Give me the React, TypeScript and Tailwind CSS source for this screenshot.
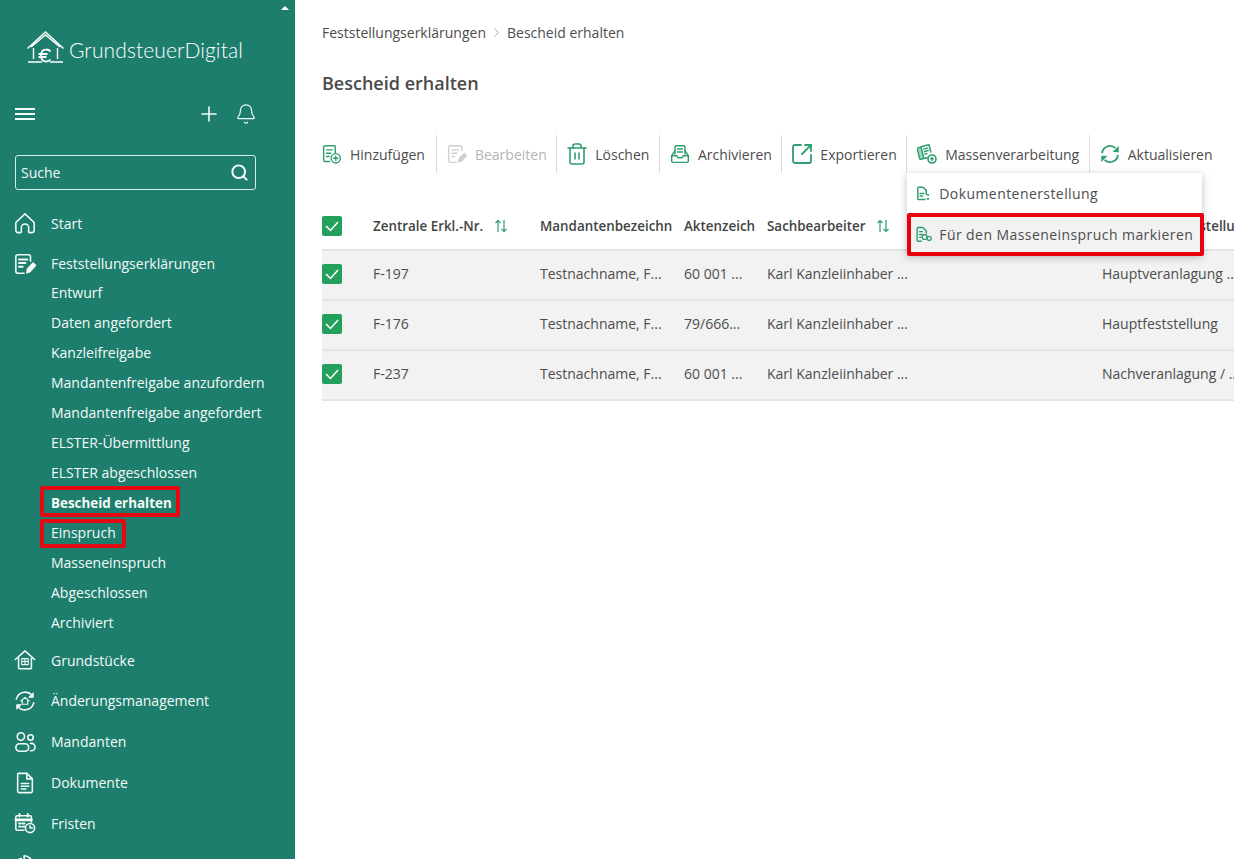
import { ReactNode } from 'react';
import { Bell, ChevronRight, Plus, Search, SquareArrowOutUpRight, Trash2 } from 'lucide-react';

const FONT = "font-['Open_Sans','Noto_Sans',sans-serif]";

type IconProps = { className?: string };

function Svg({ className, children }: IconProps & { children: ReactNode }) {
  return (
    <svg viewBox="0 0 24 24" fill="none" stroke="currentColor" strokeWidth={1.7} strokeLinecap="round" strokeLinejoin="round" className={className}>
      {children}
    </svg>
  );
}

const HomeIcon = ({ className }: IconProps) => (
  <Svg className={className}>
    <path d="M2 11.500 12 2l10 9.500V20a2.500 2.500 0 0 1-2.500 2.500H17a1 1 0 0 1-1-1V17a4 4 0 0 0-8 0v4.500a1 1 0 0 1-1 1H4.500A2.500 2.500 0 0 1 2 20z" />
  </Svg>
);

const FormIcon = ({ className }: IconProps) => (
  <Svg className={className}>
    <path d="M18 9V4a2 2 0 0 0-2-2H4a2 2 0 0 0-2 2v16a2 2 0 0 0 2 2h7" />
    <path d="M5.500 7h9M5.500 11h7M5.500 15h4" strokeWidth={2.200} />
    <path d="M14 21.500l.8-4 6-6.500 2.700 2.600-6 6.500z" fill="currentColor" />
  </Svg>
);

const HouseGridIcon = ({ className }: IconProps) => (
  <Svg className={className}>
    <path d="M1.500 11.500 12 2l10.500 9.500M5 10v10.500a1 1 0 0 0 1 1h12a1 1 0 0 0 1-1V10" />
    <path d="M8.500 10.500h7v6.500h-7zM12 10.500V17M8.500 13.700h7" strokeWidth={1.200} />
  </Svg>
);

const ChangeIcon = ({ className }: IconProps) => (
  <Svg className={className}>
    <path d="M2.500 10a10 10 0 0 1 17-4.500M21.500 14a10 10 0 0 1-17 4.500" />
    <path d="M21 3.500V8h-4.500zM3 20.500V16h4.500z" fill="currentColor" strokeWidth={1} />
    <path d="M7.500 12 12 8l4.500 4M9 11v4.500h6V11" strokeWidth={1.200} />
  </Svg>
);

const PeopleIcon = ({ className }: IconProps) => (
  <Svg className={className}>
    <circle cx="7.500" cy="6" r="4" />
    <circle cx="18" cy="7" r="3" />
    <rect x="2" y="14" width="14" height="8" rx="4" />
    <path d="M18 13.500h1a3.500 3.500 0 0 1 0 8h-1" />
  </Svg>
);

const DocIcon = ({ className }: IconProps) => (
  <Svg className={className}>
    <path d="M5 1.500h9l6 6V21a1.500 1.500 0 0 1-1.500 1.500h-13A1.500 1.500 0 0 1 4 21V2.500a1 1 0 0 1 1-1z" />
    <path d="M14 1.500V7.500h6M8 12.500h8M8 15.500h8M8 18.500h5" />
  </Svg>
);

const CalendarIcon = ({ className }: IconProps) => (
  <Svg className={className}>
    <path d="M11 20H3.500A1.500 1.500 0 0 1 2 18.500v-13A1.500 1.500 0 0 1 3.500 4h14A1.500 1.500 0 0 1 19 5.500V11" />
    <path d="M2 8.500h17" strokeWidth={3} />
    <path d="M6 2v3M15 2v3M5.500 12.500h2M9.500 12.500h2M5.500 16h2M9.500 16h2" strokeWidth={2} />
    <circle cx="17.500" cy="17.500" r="5" />
    <path d="M17.500 15v2.500h2.500" />
  </Svg>
);

const ReportIcon = ({ className }: IconProps) => (
  <Svg className={className}>
    <path d="M11 3v9h9a9 9 0 0 0-9-9zM8 6a9 9 0 1 0 10 10" />
  </Svg>
);

const AddDocIcon = ({ className }: IconProps) => (
  <Svg className={className}>
    <path d="M9 21H3.500A1.500 1.500 0 0 1 2 19.500v-16A1.500 1.500 0 0 1 3.500 2h11A1.500 1.500 0 0 1 16 3.500V11" />
    <path d="M5.500 7h7M5.500 11h5M5.500 15h3" />
    <circle cx="16.500" cy="17" r="5.500" />
    <path d="M16.500 14.500v5M14 17h5" />
  </Svg>
);

const EditDocIcon = ({ className }: IconProps) => (
  <Svg className={className}>
    <path d="M18 8V4a2 2 0 0 0-2-2H4a2 2 0 0 0-2 2v16a2 2 0 0 0 2 2h7" />
    <path d="M6 7h8M6 11h6M6 15h3" />
    <path d="M14 21.500l.8-4 6-6 2.700 2.600-6 6z" fill="currentColor" />
  </Svg>
);

const ArchiveIcon = ({ className }: IconProps) => (
  <Svg className={className}>
    <path d="M6 12V3.500A1.500 1.500 0 0 1 7.500 2h9A1.500 1.500 0 0 1 18 3.500V12" />
    <path d="M9 6h6M9 9.500h6" />
    <path d="M2 14l4-6M22 14l-4-6" />
    <path d="M2 14h6l1.500 2.500h5L16 14h6v6.500a1.500 1.500 0 0 1-1.500 1.500h-17A1.500 1.500 0 0 1 2 20.500z" />
  </Svg>
);

const BulkIcon = ({ className }: IconProps) => (
  <Svg className={className}>
    <g transform="rotate(-14 9 10)">
      <rect x="1.500" y="3" width="5" height="14" rx="1" fill="currentColor" fillOpacity={0.45} />
      <path d="M6.500 2.500h10v9M6.500 17h4" />
      <path d="M9 6h5M9 9h5M9 12h2.500" />
    </g>
    <circle cx="18" cy="18" r="4.800" fill="#fff" strokeWidth={2} />
    <path d="M18 20.500v-4M16.400 18l1.600-1.800 1.600 1.800" strokeWidth={1.400} />
  </Svg>
);

const SyncIcon = ({ className }: IconProps) => (
  <svg viewBox="0 0 24 24" fill="none" stroke="currentColor" strokeWidth={2.200} className={className}>
    <path d="M2.500 11A9.500 9.500 0 0 1 18.500 5" />
    <path d="M22.500 2.500v7.500l-7.500-.5z" fill="currentColor" stroke="none" />
    <path d="M21.500 13A9.500 9.500 0 0 1 5.500 19" />
    <path d="M1.500 21.500V14l7.500.5z" fill="currentColor" stroke="none" />
  </svg>
);

const SmallDocIcon = ({ className }: IconProps) => (
  <Svg className={className}>
    <path d="M16 21.500H6A1.500 1.500 0 0 1 4.500 20V3.500A1.500 1.500 0 0 1 6 2h7l5 5v6" strokeWidth={2.400} />
    <path d="M8 12h6M8 16h4" strokeWidth={2.200} />
    <path d="M20 14h1.500M20 20.500h1.500" strokeWidth={2.800} />
  </Svg>
);

const MarkDocIcon = ({ className }: IconProps) => (
  <Svg className={className}>
    <path d="M9 21.500H4.500A1.500 1.500 0 0 1 3 20V3.500A1.500 1.500 0 0 1 4.500 2H11l5 5v3" strokeWidth={2} />
    <path d="M6.500 8h4M6.500 12h3M6.500 16h2" strokeWidth={1.800} />
    <circle cx="13.500" cy="15.500" r="3.500" strokeWidth={1.800} />
    <circle cx="20" cy="17.500" r="2.800" strokeWidth={1.800} />
  </Svg>
);

const MenuBars = () => (
  <svg viewBox="0 0 20 14" fill="none" stroke="currentColor" strokeWidth={1.800} className="h-[14px] w-5">
    <path d="M0 2h20M0 7h20M0 12h20" />
  </svg>
);

const SortIcon = () => (
  <svg viewBox="0 0 14 14" fill="none" stroke="#3da37c" strokeWidth={1.300} className="h-[14px] w-[14px] shrink-0">
    <path d="M4 13V1.500M1.500 4 4 1.500 6.500 4M10 1v11.500M7.500 10l2.500 2.500 2.500-2.500" />
  </svg>
);

const LogoMark = () => (
  <svg viewBox="0 0 37 32" fill="none" stroke="#fff" strokeWidth={1.400} className="h-[32px] w-[37px] shrink-0">
    <path d="M.5 17.500 18.500 1l18 16.500M4 16 18.500 4 33 16" />
    <path d="M6.500 17v11M30.500 17v11" />
    <path d="M1 31h14M23 31h13" />
    <path d="M23.500 20.500a5.500 5.500 0 0 0-4.500-2c-3.500 0-5 3-5 6s1.500 6 5 6a5.500 5.500 0 0 0 4.500-2M11.500 23h9M11.500 26h8" strokeWidth={1.900} />
  </svg>
);

function Check({ className = '' }: { className?: string }) {
  return (
    <span className={`flex h-5 w-5 items-center justify-center rounded-[2px] bg-[#23a15c] ${className}`}>
      <svg viewBox="0 0 20 20" fill="none" stroke="#fff" strokeWidth={1.500} className="h-5 w-5">
        <path d="m4 10 4.500 4.500L16 6" />
      </svg>
    </span>
  );
}

const mainNav = [
  { label: 'Grundstücke', icon: HouseGridIcon },
  { label: 'Änderungsmanagement', icon: ChangeIcon },
  { label: 'Mandanten', icon: PeopleIcon },
  { label: 'Dokumente', icon: DocIcon },
  { label: 'Fristen', icon: CalendarIcon },
  { label: 'Berichte', icon: ReportIcon },
];

const subNav = [
  'Entwurf',
  'Daten angefordert',
  'Kanzleifreigabe',
  'Mandantenfreigabe anzufordern',
  'Mandantenfreigabe angefordert',
  'ELSTER-Übermittlung',
  'ELSTER abgeschlossen',
  'Bescheid erhalten',
  'Einspruch',
  'Masseneinspruch',
  'Abgeschlossen',
  'Archiviert',
];

const rows = [
  { id: 'F-197', az: '60 001 ...', art: 'Hauptveranlagung ...' },
  { id: 'F-176', az: '79/666...', art: 'Hauptfeststellung' },
  { id: 'F-237', az: '60 001 ...', art: 'Nachveranlagung / ...' },
];

const GRID = 'grid grid-cols-[51px_167px_144px_83px_335px_1fr] items-center';

function NavRow({ label, icon: Icon, className = 'h-[40.8px]' }: { label: string; icon: (p: IconProps) => ReactNode; className?: string }) {
  return (
    <div className={`flex items-center ${className}`}>
      <div className="flex w-[51px] shrink-0 pl-[14px]">
        <Icon className="h-[22px] w-[22px]" />
      </div>
      <span>{label}</span>
    </div>
  );
}

function SubRow({ label }: { label: string }) {
  const active = label === 'Bescheid erhalten';
  const marked = active || label === 'Einspruch';
  return (
    <div className={`flex h-[30px] items-center pl-[51px] ${active ? 'text-[13.4px] font-bold' : ''}`}>
      <span className="relative">
        {label}
        {marked && <span className={`absolute -left-[11px] rounded-[2px] border-[4px] border-[#e40a14] ${active ? '-right-[8px] -top-[7px] h-[31px]' : '-right-[10px] -top-[3px] h-[29px]'}`} />}
      </span>
    </div>
  );
}

function Sidebar() {
  return (
    <aside className="relative h-full w-[295px] shrink-0 overflow-hidden bg-[#1e7e6d] text-[14px] text-[#f4faf8]">
      <span className="absolute right-[6px] top-[6px] h-0 w-0 border-x-[4px] border-b-[4px] border-x-transparent border-b-white" />
      <div className="flex h-[103px] items-start gap-[5px] pl-[27px] pt-[31px]">
        <LogoMark />
        <span className="mt-[5px] font-['Lato',sans-serif] text-[21px] font-light leading-[28px] tracking-[0.12px] text-white">GrundsteuerDigital</span>
      </div>
      <div className="flex h-[22px] items-center justify-between pl-[15px] pr-[38px]">
        <MenuBars />
        <div className="flex items-center gap-[14px]">
          <Plus className="h-[24px] w-[24px]" strokeWidth={1.600} />
          <Bell className="h-[22px] w-[22px]" strokeWidth={1.300} />
        </div>
      </div>
      <div className="mx-[15px] mt-[30px] flex h-[35px] w-[241px] items-center justify-between rounded-[3px] border border-[#d5ebe5] pl-[5px] pr-[6px]">
        <span>Suche</span>
        <Search className="h-[19px] w-[19px]" strokeWidth={2.500} />
      </div>
      <div className="mt-[13px]">
        <NavRow label="Start" icon={HomeIcon} />
        <NavRow label="Feststellungserklärungen" icon={FormIcon} className="h-[34px] pt-[6px]" />
        {subNav.map(label => (
          <SubRow key={label} label={label} />
        ))}
        <div className="mt-[2px]">
          {mainNav.map(item => (
            <NavRow key={item.label} label={item.label} icon={item.icon} />
          ))}
        </div>
      </div>
    </aside>
  );
}

function ToolButton({ icon, label, disabled, last, children }: { icon: ReactNode; label: string; disabled?: boolean; last?: boolean; children?: ReactNode }) {
  return (
    <div className={`relative flex h-[38px] items-center gap-2 pl-[10px] pr-[9.5px] first:pl-0 first:pr-[11px] ${last ? '' : 'border-r border-[#dcdcdc]'} ${disabled ? 'text-[#b5b5b5]' : ''}`}>
      {icon}
      <span>{label}</span>
      {children}
    </div>
  );
}

function BulkMenu() {
  return (
    <div className="absolute left-0 top-[38px] z-10 w-[295px] bg-white text-[14px] tracking-[0.43px] shadow-[0_2px_8px_rgba(0,0,0,0.25)]">
      <div className="flex h-[41px] items-center gap-[9px] pl-[8px]">
        <SmallDocIcon className="h-[15px] w-[15px] text-[#2f9e6e]" />
        <span>Dokumentenerstellung</span>
      </div>
      <div className="relative flex h-[41px] items-center gap-[7px] bg-[#f2f2f2] pl-[8px]">
        <MarkDocIcon className="h-[17px] w-[17px] text-[#2f9e6e]" />
        <span>Für den Masseneinspruch markieren</span>
        <span className="absolute -inset-y-px -right-[2px] left-0 rounded-[2px] border-[4px] border-[#e8000f]" />
      </div>
    </div>
  );
}

function Toolbar() {
  const ic = 'h-[20px] w-[20px] text-[#2f9e6e]';
  const big = '-mx-[2px] h-[24px] w-[24px] text-[#2f9e6e]';
  return (
    <div className="mt-[38px] flex items-center">
      <ToolButton icon={<AddDocIcon className={ic} />} label="Hinzufügen" />
      <ToolButton icon={<EditDocIcon className="h-[20px] w-[20px] text-[#cfcfcf]" />} label="Bearbeiten" disabled />
      <ToolButton icon={<Trash2 className={big} strokeWidth={1.600} />} label="Löschen" />
      <ToolButton icon={<ArchiveIcon className={ic} />} label="Archivieren" />
      <ToolButton icon={<SquareArrowOutUpRight className={big} strokeWidth={1.800} />} label="Exportieren" />
      <ToolButton icon={<BulkIcon className={ic} />} label="Massenverarbeitung">
        <BulkMenu />
      </ToolButton>
      <ToolButton icon={<SyncIcon className={ic} />} label="Aktualisieren" last />
    </div>
  );
}

function Table() {
  return (
    <div className="mt-[34px] whitespace-nowrap">
      <div className={`${GRID} h-[44px] border-b-2 border-[#e4e4e4] pb-[4px] text-[13.4px] font-semibold text-[#444]`}>
        <Check />
        <div className="flex items-center gap-[11px]">
          Zentrale Erkl.-Nr. <SortIcon />
        </div>
        <div className="w-[133px] overflow-hidden">Mandantenbezeichnung</div>
        <div className="w-[71px] overflow-hidden">Aktenzeichen</div>
        <div className="flex items-center gap-[11px]">
          Sachbearbeiter <SortIcon />
        </div>
        <div>Anlass der Feststellung</div>
      </div>
      {rows.map(row => (
        <div key={row.id} className={`${GRID} h-[50px] border-b-2 border-[#e4e4e4] bg-[#f2f2f2] pb-[4px]`}>
          <Check className="mt-[2px]" />
          <div>{row.id}</div>
          <div>Testnachname, F...</div>
          <div>{row.az}</div>
          <div>Karl Kanzleiinhaber ...</div>
          <div>{row.art}</div>
        </div>
      ))}
    </div>
  );
}

export default function App() {
  return (
    <div className={`flex h-screen w-full overflow-hidden bg-white text-[14px] text-[#4d4d4d] ${FONT}`}>
      <Sidebar />
      <main className="min-w-0 flex-1 overflow-hidden pl-[27px] pt-[22px]">
        <div className="flex h-[20px] items-center">
          <span>Feststellungserklärungen</span>
          <ChevronRight className="mx-[3px] h-[15px] w-[15px] text-[#777]" strokeWidth={1} />
          <span>Bescheid erhalten</span>
        </div>
        <h1 className="mt-[27px] h-[28px] text-[18px] font-semibold leading-[28px] text-[#4a4a4a]">Bescheid erhalten</h1>
        <Toolbar />
        <Table />
      </main>
    </div>
  );
}
